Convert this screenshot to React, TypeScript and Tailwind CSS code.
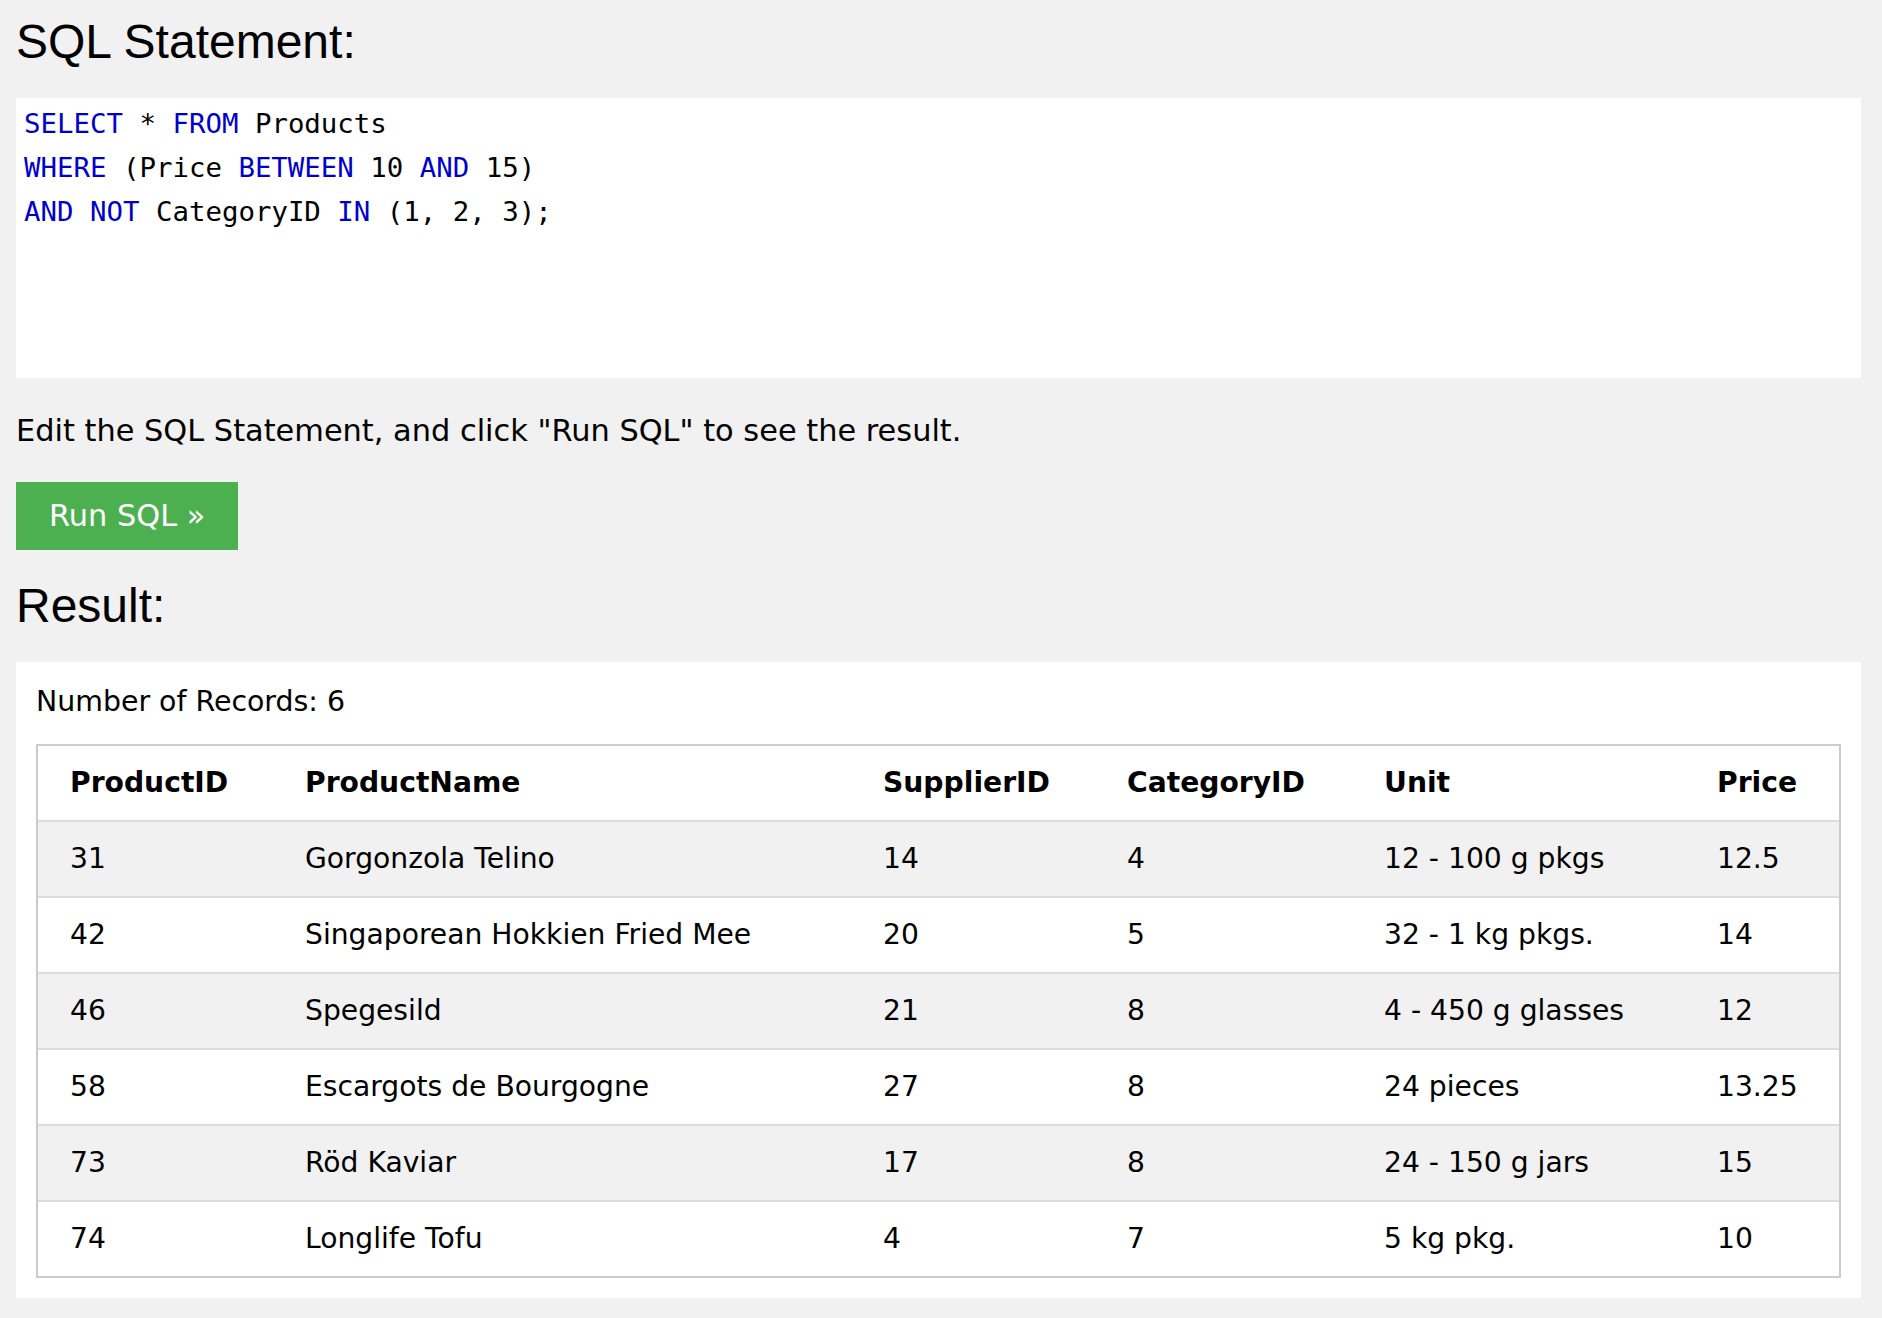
const rows = [
  ['31', 'Gorgonzola Telino', '14', '4', '12 - 100 g pkgs', '12.5'],
  ['42', 'Singaporean Hokkien Fried Mee', '20', '5', '32 - 1 kg pkgs.', '14'],
  ['46', 'Spegesild', '21', '8', '4 - 450 g glasses', '12'],
  ['58', 'Escargots de Bourgogne', '27', '8', '24 pieces', '13.25'],
  ['73', 'Röd Kaviar', '17', '8', '24 - 150 g jars', '15'],
  ['74', 'Longlife Tofu', '4', '7', '5 kg pkg.', '10'],
];

const headers = ['ProductID', 'ProductName', 'SupplierID', 'CategoryID', 'Unit', 'Price'];

const gridCols = 'grid grid-cols-[251px_578px_244px_257px_333px_1fr]';

function Kw({ children }: { children: React.ReactNode }) {
  return <span className="text-[#0000cd]">{children}</span>;
}

export default function App() {
  return (
    <div className="min-h-screen bg-[#f1f1f1] pl-[16px] pr-[21px] pt-[15px] pb-[20px] font-['DejaVu_Sans',Verdana,sans-serif] text-black">
      <h3 className="font-['Liberation_Sans',Arial,sans-serif] text-[48px] leading-[54px] font-normal">
        SQL Statement:
      </h3>

      <div className="mt-[29px] h-[280px] bg-white pl-[8px] pt-[4px] font-['DejaVu_Sans_Mono',monospace] text-[27.4px] leading-[44px] whitespace-pre">
        <div>
          <Kw>SELECT</Kw> * <Kw>FROM</Kw> Products
        </div>
        <div>
          <Kw>WHERE</Kw> (Price <Kw>BETWEEN</Kw> 10 <Kw>AND</Kw> 15)
        </div>
        <div>
          <Kw>AND</Kw> <Kw>NOT</Kw> CategoryID <Kw>IN</Kw> (1, 2, 3);
        </div>
      </div>

      <p className="mt-[33px] text-[30.4px] leading-[40px]">
        Edit the SQL Statement, and click "Run SQL" to see the result.
      </p>

      <button className="mt-[31px] flex h-[68px] items-center bg-[#4caf50] px-[33px] text-[30.4px] text-white">
        Run SQL »
      </button>

      <h3 className="mt-[29px] font-['Liberation_Sans',Arial,sans-serif] text-[48px] leading-[54px] font-normal">
        Result:
      </h3>

      <div className="mt-[29px] bg-white p-[20px]">
        <div className="text-[28.4px] leading-[40px]">Number of Records: 6</div>
        <div className="mt-[22px] border-2 border-b-0 border-[#cccccc] text-[28.2px]">
          <div className={`${gridCols} h-[76px] items-center border-b-2 border-[#dddddd] bg-white font-bold`}>
            {headers.map((h, i) => (
              <div key={h} className={i === 0 ? 'pl-[32px]' : 'pl-[16px]'}>
                {h}
              </div>
            ))}
          </div>
          {rows.map((r, ri) => (
            <div
              key={r[0]}
              className={`${gridCols} h-[76px] items-center border-b-2 ${
                ri === rows.length - 1 ? 'border-[#cccccc]' : 'border-[#dddddd]'
              } ${ri % 2 === 0 ? 'bg-[#f1f1f1]' : 'bg-white'}`}
            >
              {r.map((c, i) => (
                <div key={i} className={i === 0 ? 'pl-[32px]' : 'pl-[16px]'}>
                  {c}
                </div>
              ))}
            </div>
          ))}
        </div>
      </div>
    </div>
  );
}
